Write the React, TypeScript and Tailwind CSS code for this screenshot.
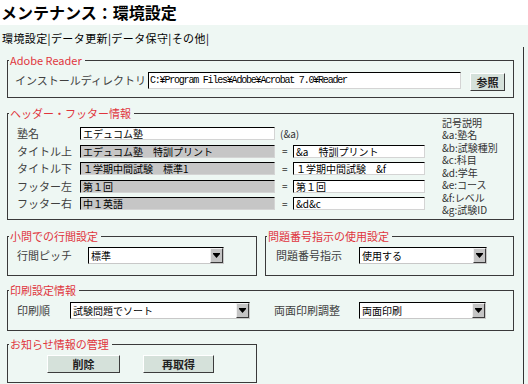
import React from "react";

function Box({
  legend,
  className,
  children,
}: {
  legend: string;
  className: string;
  children: React.ReactNode;
}) {
  return (
    <div className={`relative border border-[#3a3a3a] ${className}`}>
      <span className="absolute left-[1px] top-[-7px] whitespace-nowrap bg-[#eef7f3] pl-[1px] pr-[3px] text-[11px] leading-[12px] text-[#e0353d]">
        {legend}
      </span>
      {children}
    </div>
  );
}

function Field({
  w,
  gray,
  children,
}: {
  w: string;
  gray?: boolean;
  children: React.ReactNode;
}) {
  return (
    <div
      className={`${w} ${
        gray ? "bg-[#c6c6c6]" : "bg-white"
      } h-[13px] overflow-hidden whitespace-nowrap border border-t-black border-l-black border-r-[#d4d4d4] border-b-[#d4d4d4] pl-[2px] text-[10px] leading-[11px] text-black`}
    >
      {children}
    </div>
  );
}

function Select({ w, value }: { w: string; value: string }) {
  return (
    <div
      className={`${w} flex h-[17px] items-center border border-t-black border-l-black border-r-[#c8c8c8] border-b-[#c8c8c8] bg-white`}
    >
      <span className="flex-1 whitespace-nowrap pl-[2px] text-[10px] leading-[12px] text-black">
        {value}
      </span>
      <span className="flex h-[15px] w-[13px] items-center justify-center border border-t-[#f2f2f2] border-l-[#f2f2f2] border-r-[#3a3a3a] border-b-[#3a3a3a] bg-[#c4c4c4]">
        <svg width="7" height="5" viewBox="0 0 7 5">
          <rect x="0" y="0" width="7" height="1" fill="#000" />
          <path d="M0 1H7L3.5 5Z" fill="#000" />
        </svg>
      </span>
    </div>
  );
}

function Btn({ w, children }: { w: string; children: React.ReactNode }) {
  return (
    <button
      className={`${w} h-[18px] border border-t-white border-l-white border-r-[#3c3c3c] border-b-[#3c3c3c] bg-[#d5e1da] text-[11px] font-bold leading-[14px] text-[#222]`}
    >
      {children}
    </button>
  );
}

export default function App() {
  const rows: [string, string, boolean, string | null][] = [
    ["塾名", "エデュコム塾", false, null],
    ["タイトル上", "エデュコム塾　特訓プリント", true, "&a　特訓プリント"],
    ["タイトル下", "１学期中間試験　標準1", true, "１学期中間試験　&f"],
    ["フッター左", "第１回", true, "第１回"],
    ["フッター右", "中１英語", true, "&d&c"],
  ];
  const legendItems = [
    "記号説明",
    "&a:塾名",
    "&b:試験種別",
    "&c:科目",
    "&d:学年",
    "&e:コース",
    "&f:レベル",
    "&g:試験ID",
  ];
  return (
    <div className="flex h-[384px] w-[528px] flex-col overflow-hidden bg-white font-['Noto_Sans_CJK_JP',sans-serif] text-black">
      <div className="h-[25px] shrink-0 pl-[1px] pt-[4px] text-[16px] font-bold leading-[16px]">
        メンテナンス：環境設定
      </div>
      <div className="flex flex-1 flex-col bg-[#eef7f3]">
        <div className="h-[22px] shrink-0 pl-[2px] pt-[7px] text-[11px] leading-[13px] tracking-[0.4px] text-black">
          環境設定|データ更新|データ保守|その他|
        </div>
        <div className="flex w-[524px] flex-1 flex-col border-r border-[#333] pl-[7px]">
          {/* Adobe Reader */}
          <Box legend="Adobe Reader" className="mt-[13px] w-[507px]">
            <div className="box-content flex h-[18px] items-center pb-[8px] pl-[7px] pt-[10px]">
              <span className="w-[133px] text-[11px] leading-[13px] text-[#404040]">
                インストールディレクトリ
              </span>
              <div className="h-[17px] w-[313px] overflow-hidden whitespace-nowrap border border-t-black border-l-black border-r-[#d4d4d4] border-b-[#d4d4d4] bg-white pl-[1px] font-['Liberation_Mono',monospace] text-[10px] leading-[15px] tracking-[-1.2px] text-black">
                C:¥Program Files¥Adobe¥Acrobat 7.0¥Reader
              </div>
              <div className="ml-[9px]">
                <Btn w="w-[35px]">参照</Btn>
              </div>
            </div>
          </Box>

          {/* Header / footer */}
          <Box legend="ヘッダー・フッター情報" className="mt-[15px] w-[507px]">
            <div className="flex items-start pb-[2.5px] pl-[9px] pt-[2.5px]">
              <div className="flex flex-col pt-[8.5px]">
                {rows.map(([label, v1, gray, v2], i) => (
                  <div key={i} className="flex h-[17.5px] items-center">
                    <span className="w-[63px] text-[11px] leading-[13px] text-[#404040]">
                      {label}
                    </span>
                    <Field w="w-[195px]" gray={gray}>
                      {v1}
                    </Field>
                    {v2 === null ? (
                      <span className="w-[18px] whitespace-nowrap pl-[5px] text-[10px] leading-[12px] text-[#333]">
                        {"(&a)"}
                      </span>
                    ) : (
                      <>
                        <span className="w-[18px] pl-[7px] text-[10px] leading-[12px] text-[#333]">
                          =
                        </span>
                        <Field w="w-[132px]">{v2}</Field>
                      </>
                    )}
                  </div>
                ))}
              </div>
              <div className="ml-[17px] flex flex-col text-[10px] leading-[12.5px] text-[#333]">
                {legendItems.map((t) => (
                  <span key={t} className="h-[12.5px] whitespace-nowrap">
                    {t}
                  </span>
                ))}
              </div>
            </div>
          </Box>

          {/* Row with two boxes */}
          <div className="mt-[16px] flex gap-[8px]">
            <Box legend="小問での行間設定" className="w-[250px]">
              <div className="flex items-center pb-[11px] pl-[9px] pt-[10px]">
                <span className="w-[71px] text-[11px] leading-[13px] text-[#404040]">
                  行間ピッチ
                </span>
                <Select w="w-[136px]" value="標準" />
              </div>
            </Box>
            <Box legend="問題番号指示の使用設定" className="w-[249px]">
              <div className="flex items-center pb-[11px] pl-[10px] pt-[10px]">
                <span className="w-[83px] text-[11px] leading-[13px] text-[#404040]">
                  問題番号指示
                </span>
                <Select w="w-[128px]" value="使用する" />
              </div>
            </Box>
          </div>

          {/* Print settings */}
          <Box legend="印刷設定情報" className="mt-[14px] w-[507px]">
            <div className="flex items-center pb-[11px] pl-[9px] pt-[11px]">
              <span className="w-[53px] text-[11px] leading-[13px] text-[#404040]">
                印刷順
              </span>
              <Select w="w-[180px]" value="試験問題でソート" />
              <span className="ml-[24px] w-[85px] text-[11px] leading-[13px] text-[#404040]">
                両面印刷調整
              </span>
              <Select w="w-[127px]" value="両面印刷" />
            </div>
          </Box>

          {/* Notifications */}
          <Box legend="お知らせ情報の管理" className="mt-[13px] w-[250px]">
            <div className="flex items-center gap-[23px] pb-[9px] pl-[39px] pt-[10px]">
              <Btn w="w-[73px]">削除</Btn>
              <Btn w="w-[71px]">再取得</Btn>
            </div>
          </Box>
        </div>
      </div>
    </div>
  );
}
